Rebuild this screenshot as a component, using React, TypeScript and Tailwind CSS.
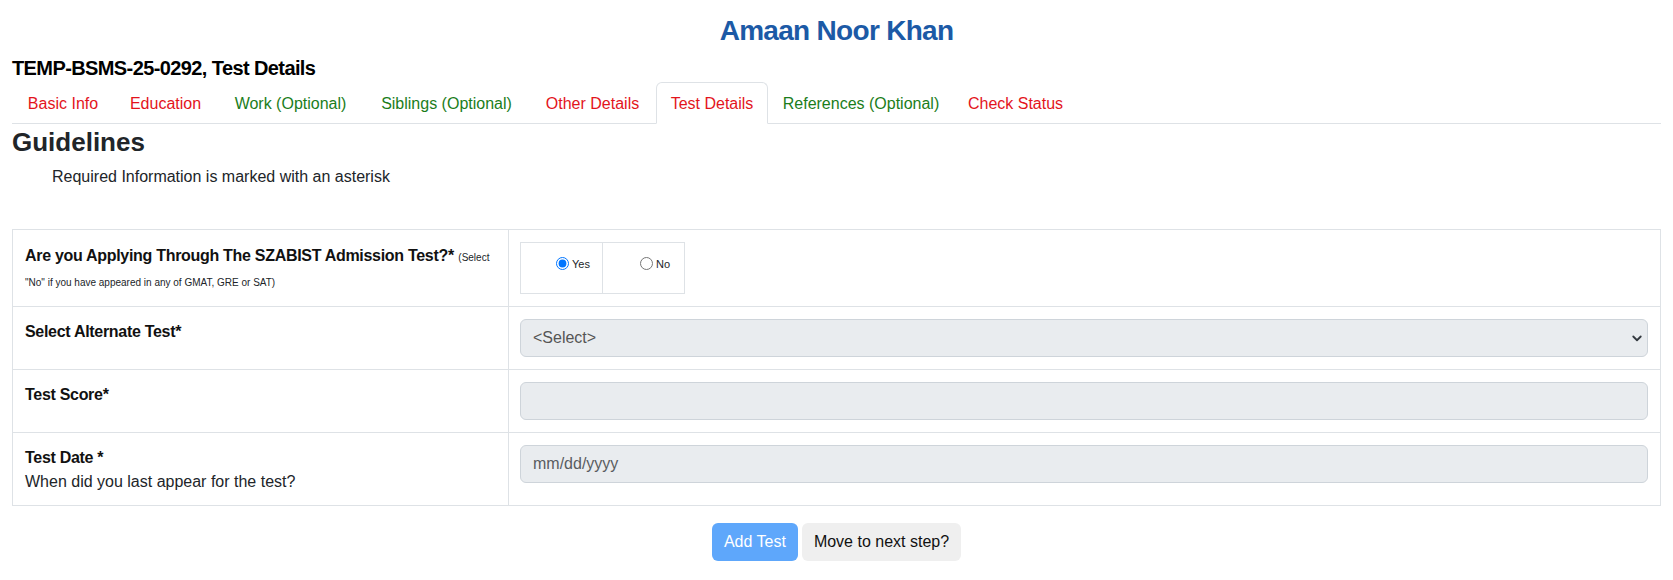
import React from "react";

const tabs: { label: string; w: string; color: string; active?: boolean }[] = [
  { label: "Basic Info", w: "w-[102px]", color: "text-[#e3141c]" },
  { label: "Education", w: "w-[103px]", color: "text-[#e3141c]" },
  { label: "Work (Optional)", w: "w-[147px]", color: "text-[#1b7d1b]" },
  { label: "Siblings (Optional)", w: "w-[165px]", color: "text-[#1b7d1b]" },
  { label: "Other Details", w: "w-[127px]", color: "text-[#e3141c]" },
  { label: "Test Details", w: "w-[112px]", color: "text-[#e3141c]", active: true },
  { label: "References (Optional)", w: "w-[186px]", color: "text-[#1b7d1b]" },
  { label: "Check Status", w: "w-[123px]", color: "text-[#e3141c]" },
];

function Chevron() {
  return (
    <svg width="12" height="12" viewBox="0 0 16 16" fill="none" className="text-[#343a40]">
      <path d="M3 6l5 5 5-5" stroke="currentColor" strokeWidth="2.4" strokeLinecap="round" strokeLinejoin="round" />
    </svg>
  );
}

export default function App() {
  return (
    <div className="min-h-screen bg-white font-['Liberation_Sans',Arial,sans-serif] text-[#212529]">
      <div className="px-[12px] pt-[14px]">
        <h1 className="text-center text-[28px] font-bold leading-[34px] tracking-[-0.7px] text-[#1c5aa6]">
          Amaan Noor Khan
        </h1>
        <h5 className="mt-[8px] text-[20px] font-bold leading-[24px] tracking-[-0.6px] text-black">
          TEMP-BSMS-25-0292, Test Details
        </h5>

        <nav className="mt-[2px] flex border-b border-[#dee2e6]">
          {tabs.map((t) => (
            <div
              key={t.label}
              className={`-mb-px flex h-[42px] items-center justify-center rounded-t-[6px] border pt-[1px] text-[16px] leading-[24px] ${t.w} ${t.color} ${
                t.active ? "border-[#dee2e6] border-b-white bg-white" : "border-transparent"
              }`}
            >
              {t.label}
            </div>
          ))}
        </nav>

        <h3 className="pt-[1px] text-[26px] font-bold leading-[34px] text-[#212529]">Guidelines</h3>
        <p className="mt-[6px] pl-[40px] text-[16px] leading-[24px] text-[#212529]">
          Required Information is marked with an asterisk
        </p>

        <div className="mt-[40px] border-x border-t border-[#dee2e6]">
          {/* Row 1 */}
          <div className="flex h-[77px] border-b border-[#dee2e6]">
            <div className="w-[496px] shrink-0 border-r border-[#dee2e6] pl-[12px] pt-[14px]">
              <div className="leading-[24px]">
                <span className="text-[16px] font-bold tracking-[-0.3px] text-[#111]">
                  Are you Applying Through The SZABIST Admission Test?*
                </span>{" "}
                <span className="text-[10px] text-[#212529]">(Select</span>
              </div>
              <div className="text-[10px] leading-[26px] text-[#212529]">
                "No" if you have appeared in any of GMAT, GRE or SAT)
              </div>
            </div>
            <div className="flex-1 pl-[11px] pr-[12px] pt-[12px]">
              <div className="flex h-[52px] w-[165px] border border-[#dee2e6]">
                <label className="flex w-[82px] items-start border-r border-[#dee2e6] pl-[35px] pt-[14px]">
                  <input type="radio" name="sat" defaultChecked className="h-[13px] w-[13px] accent-[#0075ff]" />
                  <span className="ml-[3px] text-[11px] leading-[14px] text-[#212529]">Yes</span>
                </label>
                <label className="flex flex-1 items-start pl-[37px] pt-[14px]">
                  <input type="radio" name="sat" className="h-[13px] w-[13px]" />
                  <span className="ml-[3px] text-[11px] leading-[14px] text-[#212529]">No</span>
                </label>
              </div>
            </div>
          </div>

          {/* Row 2 */}
          <div className="flex h-[63px] border-b border-[#dee2e6]">
            <div className="w-[496px] shrink-0 border-r border-[#dee2e6] pl-[12px] pt-[13px]">
              <div className="text-[16px] font-bold leading-[24px] tracking-[-0.3px] text-[#111]">
                Select Alternate Test*
              </div>
            </div>
            <div className="flex-1 pl-[11px] pr-[12px] pt-[12px]">
              <div className="flex h-[38px] items-center justify-between rounded-[6px] border border-[#ced4da] bg-[#e9ecef] pl-[12px] pr-[4px] text-[16px] text-[#555]">
                <span>&lt;Select&gt;</span>
                <Chevron />
              </div>
            </div>
          </div>

          {/* Row 3 */}
          <div className="flex h-[63px] border-b border-[#dee2e6]">
            <div className="w-[496px] shrink-0 border-r border-[#dee2e6] pl-[12px] pt-[13px]">
              <div className="text-[16px] font-bold leading-[24px] tracking-[-0.3px] text-[#111]">Test Score*</div>
            </div>
            <div className="flex-1 pl-[11px] pr-[12px] pt-[12px]">
              <div className="h-[38px] rounded-[6px] border border-[#ced4da] bg-[#e9ecef]" />
            </div>
          </div>

          {/* Row 4 */}
          <div className="flex h-[73px] border-b border-[#dee2e6]">
            <div className="w-[496px] shrink-0 border-r border-[#dee2e6] pl-[12px] pt-[13px]">
              <div className="text-[16px] font-bold leading-[24px] tracking-[-0.3px] text-[#111]">Test Date *</div>
              <div className="text-[16px] leading-[24px] text-[#212529]">When did you last appear for the test?</div>
            </div>
            <div className="flex-1 pl-[11px] pr-[12px] pt-[12px]">
              <div className="flex h-[38px] items-center rounded-[6px] border border-[#ced4da] bg-[#e9ecef] pl-[12px] text-[16px] text-[#595c5f]">
                mm/dd/yyyy
              </div>
            </div>
          </div>
        </div>

        <div className="mt-[17px] flex justify-center gap-[4px]">
          <button className="h-[38px] rounded-[6px] bg-[#5ea7fb] px-[12px] text-[16px] leading-[24px] text-white">
            Add Test
          </button>
          <button className="h-[38px] rounded-[6px] bg-[#efefef] px-[12px] text-[16px] leading-[24px] text-[#111]">
            Move to next step?
          </button>
        </div>
      </div>
    </div>
  );
}
